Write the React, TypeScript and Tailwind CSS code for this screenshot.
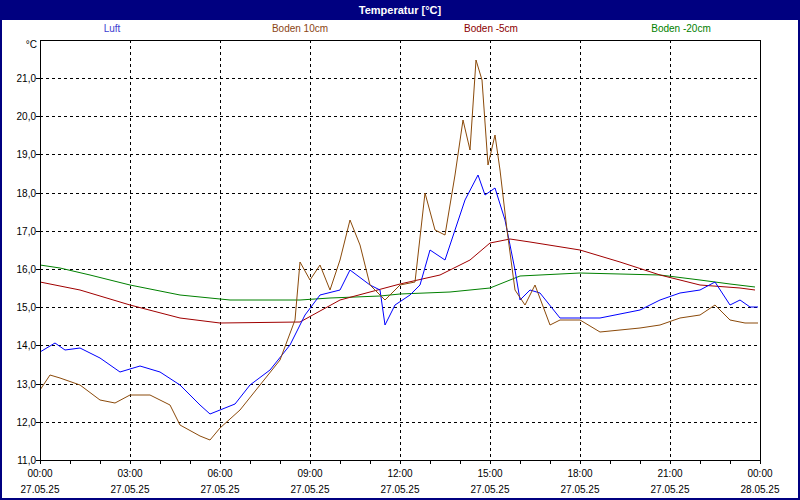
import React from "react";

const green = [[40,265],[60,268],[90,275],[130,285],[180,295],[230,300],[300,300],[330,298],[380,296],[400,294],[450,292],[490,288],[510,280],[520,276],[580,273],[660,275],[700,280],[730,284],[755,287]];
const red = [[40,282],[80,290],[130,305],[180,318],[220,323],[300,322],[340,300],[370,292],[400,284],[440,275],[470,260],[490,243],[510,239],[530,242],[580,250],[620,262],[660,275],[700,285],[740,288],[755,290]];
const blue = [[40,352],[55,343],[65,350],[80,348],[100,358],[120,372],[140,366],[160,372],[180,385],[200,405],[210,414],[220,410],[235,404],[250,385],[270,370],[290,345],[305,315],[320,295],[340,290],[350,270],[370,285],[380,290],[385,325],[395,305],[410,295],[420,285],[430,250],[445,260],[455,230],[465,200],[478,175],[485,195],[495,188],[505,220],[515,270],[520,300],[530,290],[540,293],[560,318],[580,318],[600,318],[620,314],[640,310],[660,300],[680,293],[700,290],[715,282],[730,305],[740,300],[750,307],[758,307]];
const brown = [[40,390],[50,375],[60,378],[80,385],[100,400],[115,403],[130,395],[150,395],[170,405],[180,425],[200,436],[210,440],[220,428],[240,410],[260,385],[280,360],[295,320],[300,262],[310,280],[320,265],[330,290],[340,260],[350,220],[360,245],[370,285],[385,300],[400,285],[415,282],[425,193],[435,230],[445,235],[455,175],[463,120],[470,150],[476,60],[482,80],[488,165],[495,135],[500,170],[507,230],[515,290],[525,305],[535,285],[550,325],[560,320],[580,320],[600,332],[620,330],[640,328],[660,325],[680,318],[700,315],[715,305],[730,320],[745,323],[758,323]];

const pts = (a: number[][]) => a.map((p) => p.join(",")).join(" ");
const yv = (v: number) => 460 - (v - 11) * 38.2;
const hours = ["00:00","03:00","06:00","09:00","12:00","15:00","18:00","21:00","00:00"];

export default function App() {
  const font = { fontFamily: '"Liberation Sans", Arial, sans-serif' };
  return (
    <div className="w-[800px] h-[500px] bg-white flex flex-col" style={font}>
      <div className="h-5 bg-[#000080] text-white text-[11px] font-bold flex items-center justify-center">Temperatur [°C]</div>
      <div className="flex-1 border-2 border-t-0 border-[#000080] flex flex-col">
        <div className="h-4 flex text-[10px] items-center">
          <span className="w-[220px] text-center text-[#4040d0]">Luft</span>
          <span className="w-[156px] text-center text-[#8b4513]">Boden 10cm</span>
          <span className="w-[226px] text-center text-[#8b0000]">Boden -5cm</span>
          <span className="w-[154px] text-center text-[#008000]">Boden -20cm</span>
        </div>
        <svg width="796" height="462" viewBox="2 36 796 462" className="block">
          <g stroke="#000" strokeWidth="1" strokeDasharray="3,3" shapeRendering="crispEdges">
            {[1,2,3,4,5,6,7].map((i) => <line key={"v"+i} x1={40+i*90+0.5} y1={40} x2={40+i*90+0.5} y2={460} />)}
            {[12,13,14,15,16,17,18,19,20,21].map((v) => <line key={"h"+v} x1={40} y1={Math.round(yv(v))+0.5} x2={760} y2={Math.round(yv(v))+0.5} />)}
          </g>
          <g fill="none" strokeWidth="1" strokeLinejoin="round">
            <polyline points={pts(green)} stroke="#008000" />
            <polyline points={pts(red)} stroke="#a00000" />
            <polyline points={pts(blue)} stroke="#0000ff" />
            <polyline points={pts(brown)} stroke="#8b4a0a" />
          </g>
          <g stroke="#000" shapeRendering="crispEdges">
            <rect x="40.5" y="40.5" width="720" height="420" fill="none" strokeWidth="1" />
            {Array.from({ length: 25 }).map((_, i) => <line key={i} x1={40+i*30+0.5} y1={460} x2={40+i*30+0.5} y2={464} />)}
            {[11,12,13,14,15,16,17,18,19,20,21].map((v) => <line key={v} x1={36} y1={Math.round(yv(v))+0.5} x2={40} y2={Math.round(yv(v))+0.5} />)}
          </g>
          <g fontSize="10" fill="#000" style={font}>
            <text x="37" y="48" textAnchor="end">°C</text>
            {[11,12,13,14,15,16,17,18,19,20,21].map((v) => <text key={v} x="36" y={Math.round(yv(v))+4} textAnchor="end">{v},0</text>)}
            {hours.map((h, i) => (
              <g key={i}>
                <text x={40+i*90} y="477" textAnchor="middle">{h}</text>
                <text x={40+i*90} y="493" textAnchor="middle">{i === 8 ? "28.05.25" : "27.05.25"}</text>
              </g>
            ))}
          </g>
        </svg>
      </div>
    </div>
  );
}
